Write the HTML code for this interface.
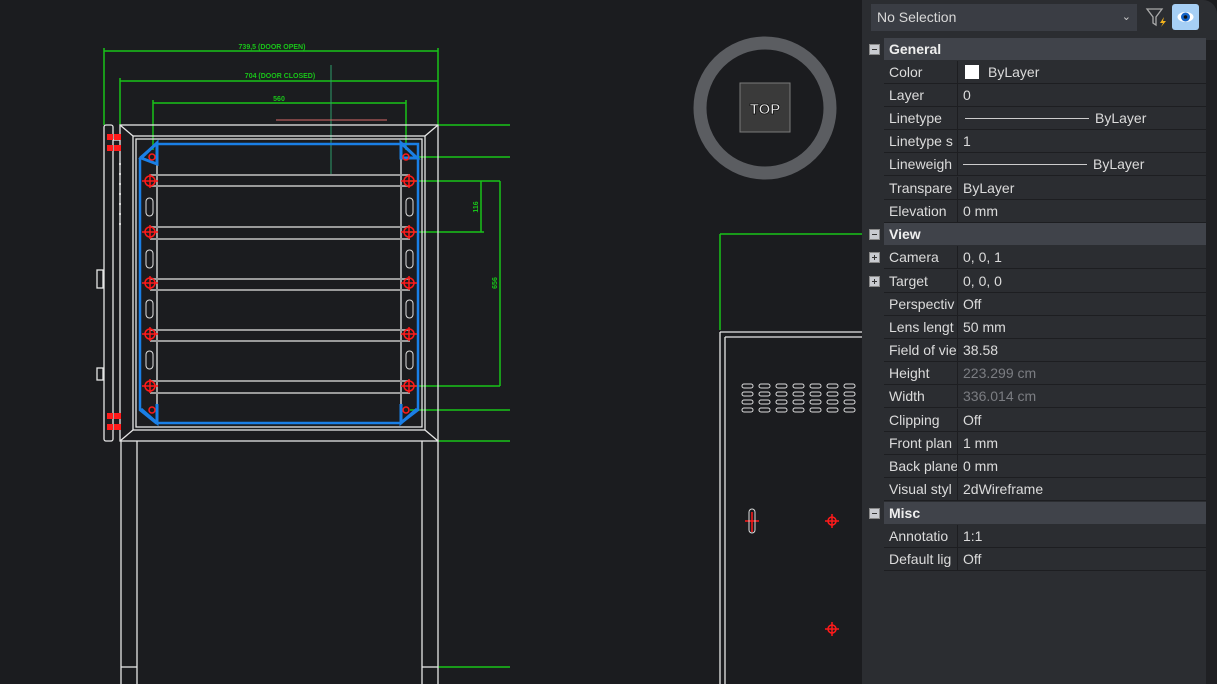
<!DOCTYPE html>
<html><head><meta charset="utf-8"><style>
html,body{margin:0;padding:0;width:1217px;height:684px;overflow:hidden;background:#1b1c1f;font-family:"Liberation Sans","DejaVu Sans",sans-serif}
svg.d{position:absolute;left:0;top:0}
.panel{position:absolute;left:862px;top:0;width:355px;height:684px;background:#2b2d31;border-top-right-radius:14px;overflow:hidden}
.strip{position:absolute;right:0;top:40px;width:11px;height:644px;background:#1f2023}
.sel{position:absolute;left:9px;top:4px;width:266px;height:27px;background:#3a3d44;color:#d8d8d8;font-size:14px;line-height:27px;padding-left:6px;box-sizing:border-box}
.sel .chev{position:absolute;right:6px;top:0;font-size:11px;color:#ccc}
.eye{position:absolute;left:310px;top:4px;width:27px;height:26px;background:#a6cff5;border-radius:3px}
.row{position:absolute;left:22px;width:322px;height:22px;border-bottom:1px solid #1d1e21;color:#dcdcdc;font-size:14px;line-height:22px}
.row .l{position:absolute;left:5px;width:68px;overflow:hidden;white-space:nowrap}
.row .v{position:absolute;left:73px;top:0;height:22px;border-left:1px solid #1d1e21;padding-left:5px;white-space:nowrap}
.hdr{position:absolute;left:22px;width:322px;height:22px;background:#40434a;color:#eee;font-size:14px;font-weight:bold;line-height:22px;padding-left:5px;box-sizing:border-box}
.pm{position:absolute;left:7px;width:9px;height:9px;background:#c9cbd0;border:1px solid #888}
.pm:after{content:"";position:absolute;left:2px;top:4px;width:5px;height:1px;background:#333}
.pp:before{content:"";position:absolute;left:4px;top:2px;width:1px;height:5px;background:#333}
.gray{color:#7b7d82}
</style></head><body>
<svg class="d" width="862" height="684" viewBox="0 0 862 684">
<g stroke="#19c319" stroke-width="1.5" fill="none">
<line x1="104" y1="51" x2="438" y2="51"/><line x1="104" y1="48" x2="104" y2="125"/><line x1="438" y1="48" x2="438" y2="125"/>
<line x1="120" y1="81" x2="438" y2="81"/><line x1="120" y1="78" x2="120" y2="125"/>
<line x1="153" y1="103" x2="406" y2="103"/><line x1="153" y1="100" x2="153" y2="150"/><line x1="406" y1="100" x2="406" y2="150"/>
<line x1="438" y1="125" x2="510" y2="125"/><line x1="418" y1="157" x2="510" y2="157"/>
<line x1="410" y1="181" x2="500" y2="181"/><line x1="410" y1="232" x2="484" y2="232"/><line x1="410" y1="386" x2="500" y2="386"/>
<line x1="481" y1="181" x2="481" y2="232"/><line x1="500" y1="181" x2="500" y2="386"/>
<line x1="410" y1="410" x2="510" y2="410"/><line x1="438" y1="441" x2="510" y2="441"/><line x1="438" y1="667" x2="510" y2="667"/>
<line x1="720" y1="234" x2="862" y2="234"/><line x1="720" y1="234" x2="720" y2="330"/>
</g>
<line x1="331" y1="65" x2="331" y2="175" stroke="#2e9c6a" stroke-width="1"/>
<line x1="276" y1="120" x2="387" y2="120" stroke="#d86a6a" stroke-width="1"/>
<g fill="#19c319" font-size="7" font-weight="bold" font-family="Liberation Sans Narrow, Liberation Sans">
<text x="272" y="49" text-anchor="middle">739,5 (DOOR OPEN)</text>
<text x="280" y="78" text-anchor="middle">704 (DOOR CLOSED)</text>
<text x="279" y="101" text-anchor="middle">560</text>
<text x="478" y="207" transform="rotate(-90 478 207)" text-anchor="middle">116</text>
<text x="497" y="283" transform="rotate(-90 497 283)" text-anchor="middle">656</text>
</g>
<g stroke="#e6e6e6" stroke-width="1.3" fill="none">
<rect x="120" y="125" width="318" height="316"/>
<rect x="133" y="136" width="292" height="294"/>
<rect x="136" y="139" width="286" height="288"/>
<line x1="120" y1="125" x2="133" y2="136"/><line x1="438" y1="125" x2="425" y2="136"/>
<line x1="120" y1="441" x2="133" y2="430"/><line x1="438" y1="441" x2="425" y2="430"/>
<rect x="104" y="125" width="9" height="316" rx="2"/>
<line x1="113" y1="140" x2="120" y2="140"/>
<line x1="121" y1="441" x2="121" y2="684"/><line x1="137" y1="441" x2="137" y2="684"/>
<line x1="422" y1="441" x2="422" y2="684"/><line x1="438" y1="441" x2="438" y2="684"/>
<line x1="121" y1="667" x2="137" y2="667"/><line x1="422" y1="667" x2="438" y2="667"/>
<line x1="157" y1="145" x2="157" y2="420"/><line x1="401" y1="145" x2="401" y2="420"/>
<rect x="97" y="270" width="6" height="18"/><rect x="97" y="368" width="6" height="12"/>
<line x1="720" y1="332" x2="720" y2="684"/><line x1="725" y1="337" x2="725" y2="684"/>
<line x1="720" y1="332" x2="862" y2="332"/><line x1="725" y1="337" x2="862" y2="337"/>
</g>
<g stroke="#9a9a9a" stroke-width="2">
<line x1="150" y1="175" x2="410" y2="175"/><line x1="150" y1="186" x2="410" y2="186"/>
<line x1="150" y1="227" x2="410" y2="227"/><line x1="150" y1="239" x2="410" y2="239"/>
<line x1="150" y1="279" x2="410" y2="279"/><line x1="150" y1="290" x2="410" y2="290"/>
<line x1="150" y1="330" x2="410" y2="330"/><line x1="150" y1="341" x2="410" y2="341"/>
<line x1="150" y1="381" x2="410" y2="381"/><line x1="150" y1="393" x2="410" y2="393"/>
</g>
<g stroke="#ddd" stroke-width="1" fill="none">
<rect x="146" y="198" width="7" height="18" rx="3.5"/><rect x="146" y="250" width="7" height="18" rx="3.5"/><rect x="146" y="300" width="7" height="18" rx="3.5"/><rect x="146" y="351" width="7" height="18" rx="3.5"/>
<rect x="406" y="198" width="7" height="18" rx="3.5"/><rect x="406" y="250" width="7" height="18" rx="3.5"/><rect x="406" y="300" width="7" height="18" rx="3.5"/><rect x="406" y="351" width="7" height="18" rx="3.5"/>
</g>
<path d="M140 158 L156 144 L418 144 L418 157 M140 158 L140 410 L156 423 L401 423 L418 410 L418 144" stroke="#1a7fe6" stroke-width="2.5" fill="none"/>
<g stroke="#1a7fe6" stroke-width="3" fill="none">
<path d="M141 158 L157 143 L157 164 Z"/><path d="M401 143 L417 158 L401 158 Z"/>
<path d="M141 409 L157 423 L157 404"/><path d="M417 409 L401 423 L401 404"/>
</g>
<g stroke="#ff1a1a" stroke-width="1.5" fill="none">
<circle cx="150" cy="181" r="5"/><line x1="142" y1="181" x2="158" y2="181"/><line x1="150" y1="174" x2="150" y2="188"/>
<circle cx="150" cy="232" r="5"/><line x1="142" y1="232" x2="158" y2="232"/><line x1="150" y1="225" x2="150" y2="239"/>
<circle cx="150" cy="283" r="5"/><line x1="142" y1="283" x2="158" y2="283"/><line x1="150" y1="276" x2="150" y2="290"/>
<circle cx="150" cy="334" r="5"/><line x1="142" y1="334" x2="158" y2="334"/><line x1="150" y1="327" x2="150" y2="341"/>
<circle cx="150" cy="386" r="5"/><line x1="142" y1="386" x2="158" y2="386"/><line x1="150" y1="379" x2="150" y2="393"/>
<circle cx="409" cy="181" r="5"/><line x1="401" y1="181" x2="417" y2="181"/><line x1="409" y1="174" x2="409" y2="188"/>
<circle cx="409" cy="232" r="5"/><line x1="401" y1="232" x2="417" y2="232"/><line x1="409" y1="225" x2="409" y2="239"/>
<circle cx="409" cy="283" r="5"/><line x1="401" y1="283" x2="417" y2="283"/><line x1="409" y1="276" x2="409" y2="290"/>
<circle cx="409" cy="334" r="5"/><line x1="401" y1="334" x2="417" y2="334"/><line x1="409" y1="327" x2="409" y2="341"/>
<circle cx="409" cy="386" r="5"/><line x1="401" y1="386" x2="417" y2="386"/><line x1="409" y1="379" x2="409" y2="393"/>
<circle cx="152" cy="157" r="3"/><circle cx="406" cy="157" r="3"/><circle cx="152" cy="410" r="3"/><circle cx="406" cy="410" r="3"/>
<circle cx="832" cy="521" r="4"/><line x1="825" y1="521" x2="839" y2="521"/><line x1="832" y1="514" x2="832" y2="528"/>
<circle cx="832" cy="629" r="4"/><line x1="825" y1="629" x2="839" y2="629"/><line x1="832" y1="622" x2="832" y2="636"/>
<line x1="745" y1="521" x2="759" y2="521"/><line x1="752" y1="512" x2="752" y2="532"/>
</g>
<g fill="#ff1a1a"><rect x="107" y="134" width="6" height="6"/><rect x="107" y="145" width="6" height="6"/><rect x="114" y="134" width="7" height="6"/><rect x="114" y="145" width="7" height="6"/>
<rect x="107" y="413" width="6" height="6"/><rect x="107" y="424" width="6" height="6"/><rect x="114" y="413" width="7" height="6"/><rect x="114" y="424" width="7" height="6"/></g>
<g fill="#ddd"><rect x="119" y="163" width="2" height="2"/><rect x="119" y="173" width="2" height="2"/><rect x="119" y="183" width="2" height="2"/><rect x="119" y="193" width="2" height="2"/><rect x="119" y="203" width="2" height="2"/><rect x="119" y="213" width="2" height="2"/><rect x="119" y="223" width="2" height="2"/></g>
<rect x="749" y="509" width="6" height="24" rx="3" stroke="#ddd" fill="none"/>
<g stroke="#ddd" stroke-width="1" fill="none">
<g id="vs"><rect x="742" y="384" width="11" height="4" rx="2"/><rect x="742" y="392" width="11" height="4" rx="2"/><rect x="742" y="400" width="11" height="4" rx="2"/><rect x="742" y="408" width="11" height="4" rx="2"/></g>
<use href="#vs" x="17"/><use href="#vs" x="34"/><use href="#vs" x="51"/><use href="#vs" x="68"/><use href="#vs" x="85"/><use href="#vs" x="102"/>
</g>
<circle cx="765" cy="108" r="65" stroke="#5b5d61" stroke-width="13" fill="none"/>
<rect x="740" y="83" width="50" height="49" fill="#3a3a3a" stroke="#7a7a7a" stroke-width="1"/>
<text x="765" y="114" text-anchor="middle" font-size="15" font-weight="bold" fill="#e8e8e8" stroke="#111" stroke-width="0.8" font-family="Liberation Sans">TOP</text>
</svg>
<div class="panel">
<div class="strip"></div>
<div class="sel">No Selection<span class="chev">&#8964;</span></div>
<svg style="position:absolute;left:283px;top:6px" width="24" height="22"><path d="M2 3 H17 L11 11 V19 L8 17 V11 Z" stroke="#aaa" stroke-width="1.3" fill="none"/><path d="M19 11 L15 17 H18 L16 21 L21 15 H18 Z" fill="#f3b31c"/></svg>
<div class="eye"><svg width="27" height="26"><ellipse cx="13.5" cy="13" rx="8" ry="5" fill="#fff"/><circle cx="13.5" cy="13" r="4.5" fill="#1464c8"/><circle cx="13.5" cy="13" r="1.8" fill="#111"/></svg></div>
<div class="pm" style="top:44px"></div><div class="hdr" style="top:38px">General</div>
<div class="row" style="top:61px"><span class="l">Color</span><span class="v"><span style="display:inline-block;width:14px;height:14px;background:#fff;vertical-align:-2px;margin-right:9px;margin-left:2px"></span>ByLayer</span></div>
<div class="row" style="top:84px"><span class="l">Layer</span><span class="v">0</span></div>
<div class="row" style="top:107px"><span class="l">Linetype</span><span class="v"><span style="display:inline-block;width:124px;height:1px;background:#ccc;vertical-align:4px;margin:0 6px 0 2px"></span>ByLayer</span></div>
<div class="row" style="top:130px"><span class="l">Linetype s</span><span class="v">1</span></div>
<div class="row" style="top:153px"><span class="l">Lineweigh</span><span class="v"><span style="display:inline-block;width:124px;height:1px;background:#ccc;vertical-align:4px;margin:0 6px 0 0"></span>ByLayer</span></div>
<div class="row" style="top:177px"><span class="l">Transpare</span><span class="v">ByLayer</span></div>
<div class="row" style="top:200px"><span class="l">Elevation</span><span class="v">0 mm</span></div>
<div class="pm" style="top:229px"></div><div class="hdr" style="top:223px">View</div>
<div class="pm pp" style="top:252px"></div><div class="row" style="top:246px"><span class="l">Camera</span><span class="v">0, 0, 1</span></div>
<div class="pm pp" style="top:276px"></div><div class="row" style="top:270px"><span class="l">Target</span><span class="v">0, 0, 0</span></div>
<div class="row" style="top:293px"><span class="l">Perspectiv</span><span class="v">Off</span></div>
<div class="row" style="top:316px"><span class="l">Lens lengt</span><span class="v">50 mm</span></div>
<div class="row" style="top:339px"><span class="l">Field of vie</span><span class="v">38.58</span></div>
<div class="row" style="top:362px"><span class="l">Height</span><span class="v gray">223.299 cm</span></div>
<div class="row" style="top:385px"><span class="l">Width</span><span class="v gray">336.014 cm</span></div>
<div class="row" style="top:409px"><span class="l">Clipping</span><span class="v">Off</span></div>
<div class="row" style="top:432px"><span class="l">Front plan</span><span class="v">1 mm</span></div>
<div class="row" style="top:455px"><span class="l">Back plane</span><span class="v">0 mm</span></div>
<div class="row" style="top:478px"><span class="l">Visual styl</span><span class="v">2dWireframe</span></div>
<div class="pm" style="top:508px"></div><div class="hdr" style="top:502px">Misc</div>
<div class="row" style="top:525px"><span class="l">Annotatio</span><span class="v">1:1</span></div>
<div class="row" style="top:548px"><span class="l">Default lig</span><span class="v">Off</span></div>
</div>
</body></html>
